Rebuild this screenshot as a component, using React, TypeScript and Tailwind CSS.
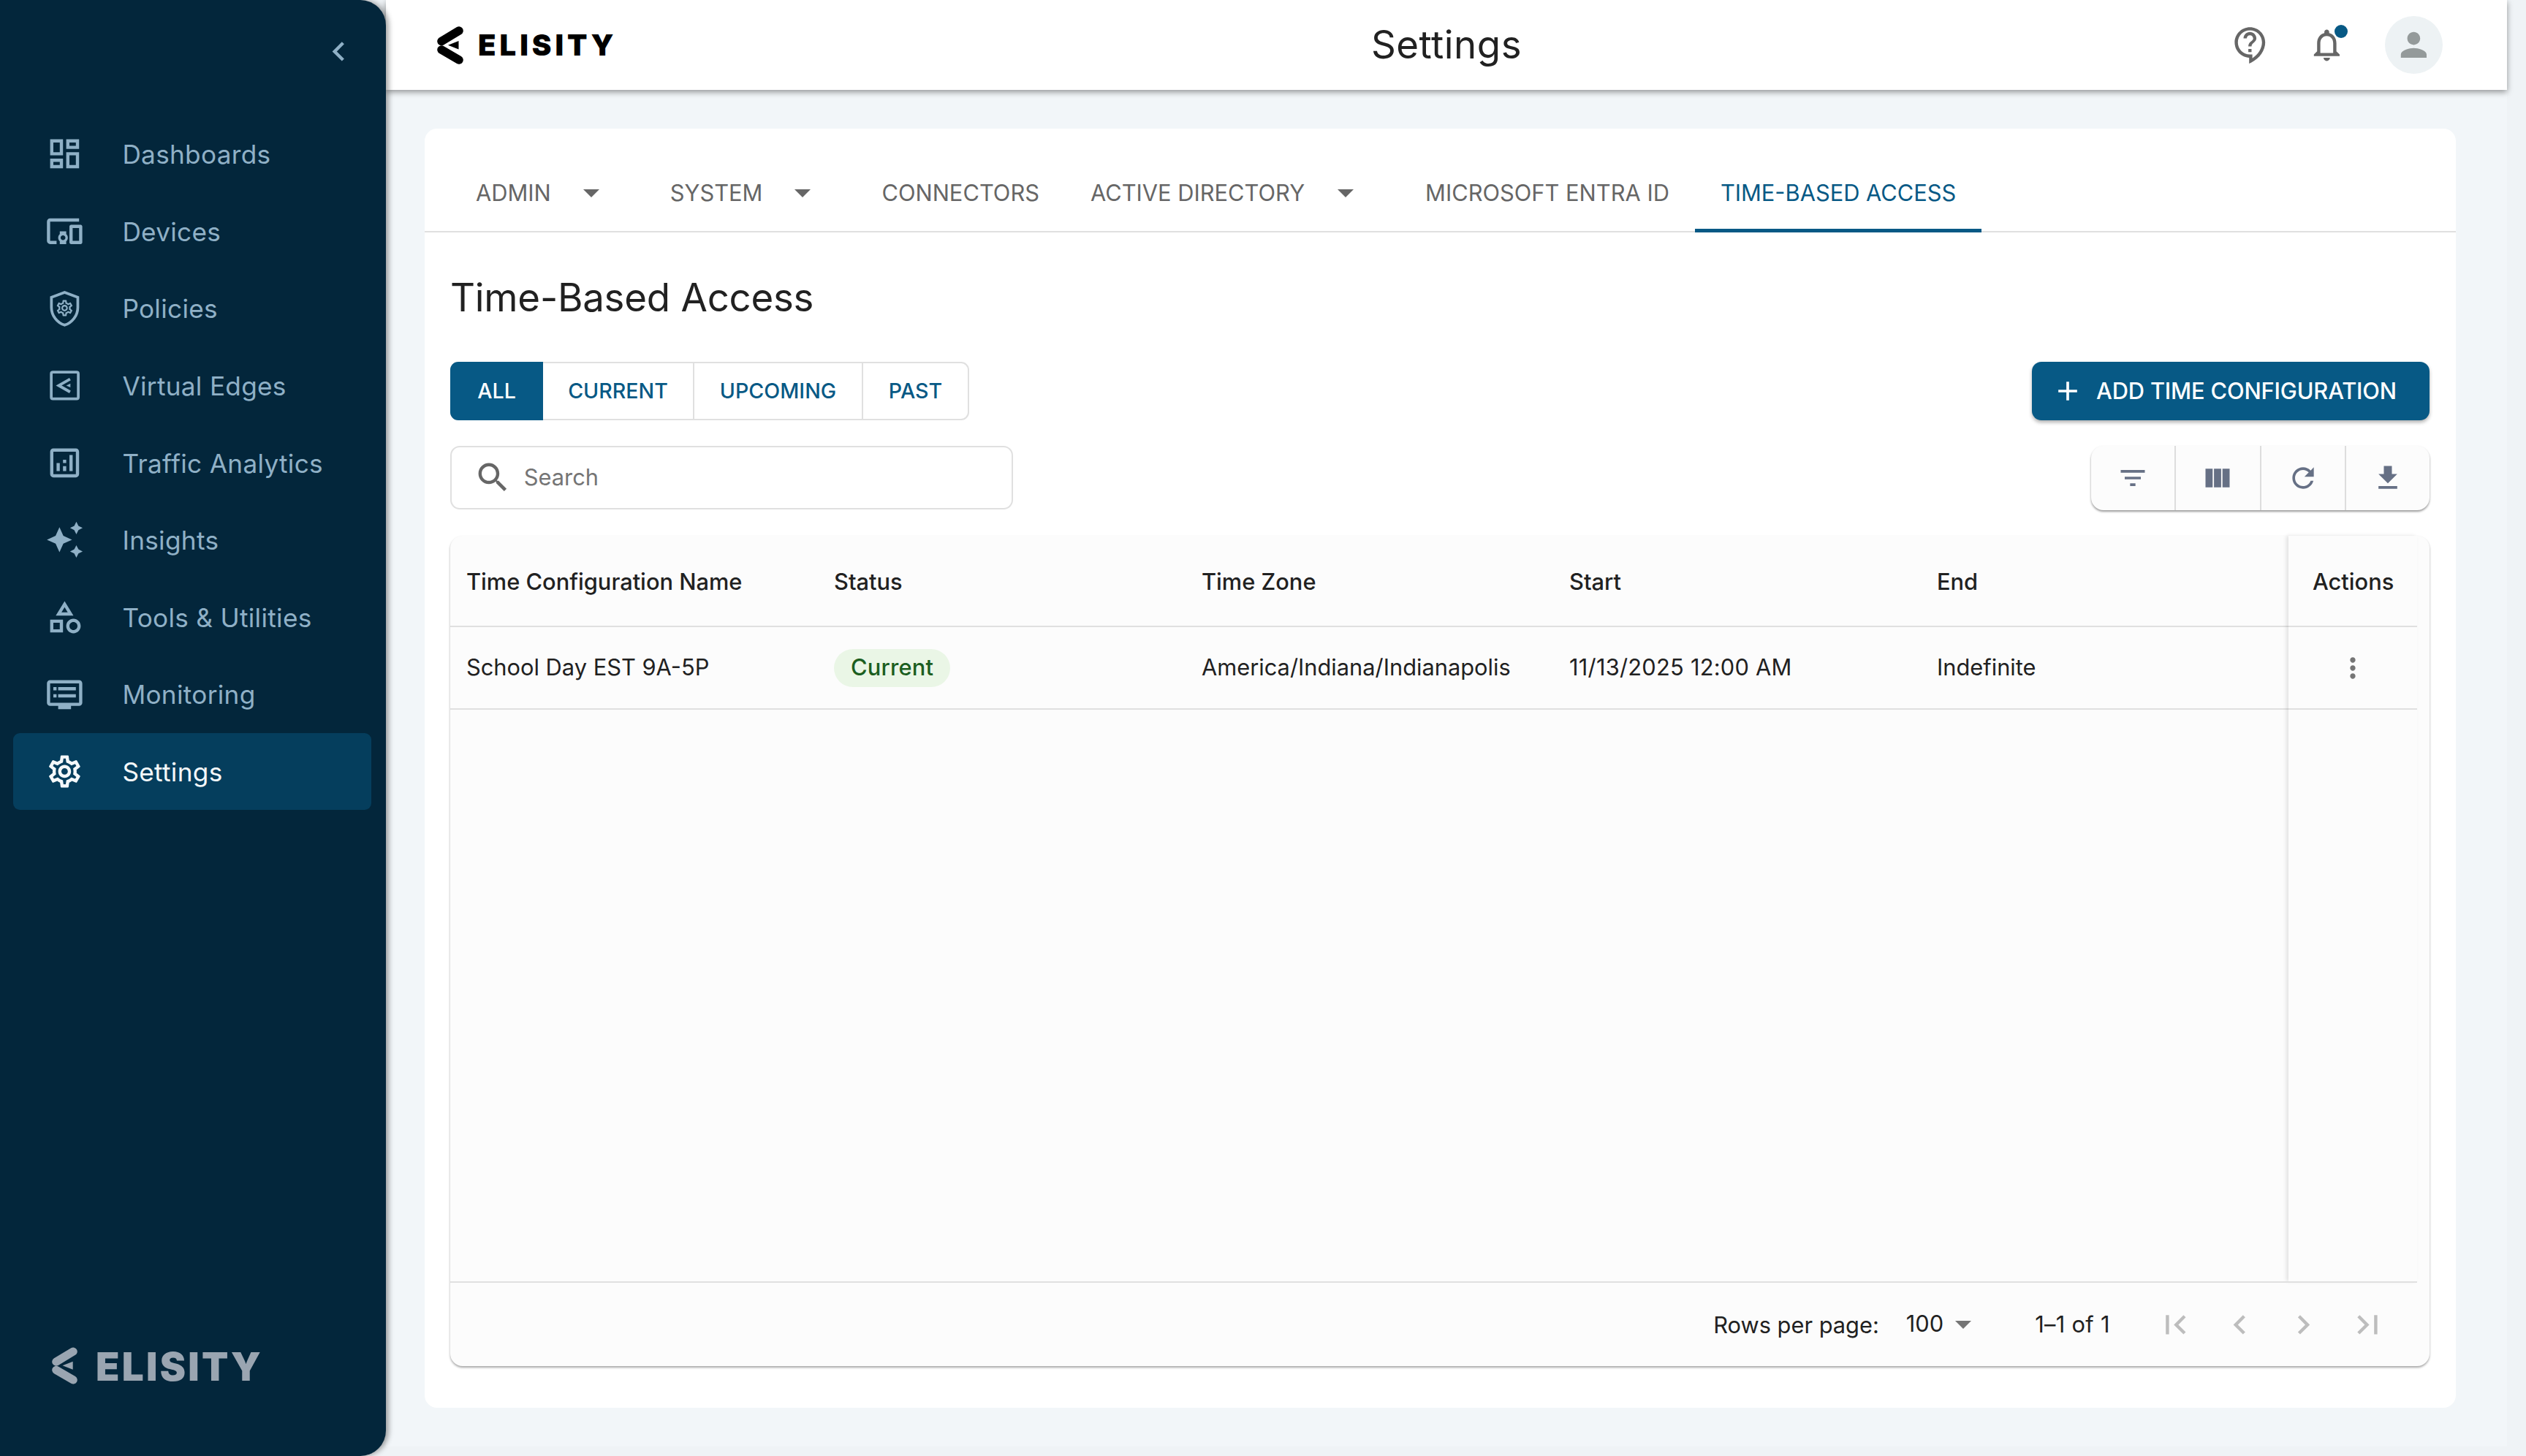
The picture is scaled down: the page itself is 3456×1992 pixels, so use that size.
import type { ReactNode } from "react";

const ICONS = {
  dashboard:
    "M19 5v2h-4V5h4M9 5v6H5V5h4m10 8v6h-4v-6h4M9 17v2H5v-2h4M21 3h-8v6h8V3zM11 3H3v10h8V3zm10 8h-8v10h8V11zm-10 4H3v6h8v-6z",
  devices:
    "M3 6h18V4H3c-1.1 0-2 .9-2 2v12c0 1.1.9 2 2 2h4v-2H3V6zm10 6H9v1.78c-.61.55-1 1.33-1 2.22s.39 1.67 1 2.22V20h4v-1.78c.61-.55 1-1.34 1-2.22s-.39-1.67-1-2.22V12zm-2 5.5c-.83 0-1.5-.68-1.5-1.5s.67-1.5 1.5-1.5 1.5.68 1.5 1.5-.67 1.5-1.5 1.5zM22 8h-6c-.5 0-1 .5-1 1v10c0 .5.5 1 1 1h6c.5 0 1-.5 1-1V9c0-.5-.5-1-1-1zm-1 10h-4v-8h4v8z",
  analytics:
    "M19 3H5c-1.1 0-2 .9-2 2v14c0 1.1.9 2 2 2h14c1.1 0 2-.9 2-2V5c0-1.1-.9-2-2-2zm0 16H5V5h14v14zM7 12h2v5H7zm8-5h2v10h-2zm-4 7h2v3h-2zm0-4h2v2h-2z",
  category:
    "M12 2l-5.5 9h11L12 2zm0 3.84L13.93 9h-3.87L12 5.84zM17.5 13c-2.49 0-4.5 2.01-4.5 4.5s2.01 4.5 4.5 4.5 4.5-2.01 4.5-4.5-2.01-4.5-4.5-4.5zm0 7c-1.38 0-2.5-1.12-2.5-2.5s1.12-2.5 2.5-2.5 2.5 1.12 2.5 2.5-1.12 2.5-2.5 2.5zM3 21.5h8v-8H3v8zm2-6h4v4H5v-4z",
  monitor:
    "M21 3H3c-1.1 0-2 .9-2 2v12c0 1.1.9 2 2 2h5v2h8v-2h5c1.1 0 2-.9 2-2V5c0-1.1-.9-2-2-2zm0 14H3V5h18v12zM5 7.3h2v2H5zM8 7.3h11v2H8zM5 11.7h2v2H5zM8 11.7h11v2H8z",
  settings:
    "M19.43 12.98c.04-.32.07-.64.07-.98 0-.34-.03-.66-.07-.98l2.11-1.65c.19-.15.24-.42.12-.64l-2-3.46c-.09-.16-.26-.25-.44-.25-.06 0-.12.01-.17.03l-2.49 1c-.52-.4-1.08-.73-1.69-.98l-.38-2.65C14.46 2.18 14.25 2 14 2h-4c-.25 0-.46.18-.49.42l-.38 2.65c-.61.25-1.17.59-1.69.98l-2.49-1c-.06-.02-.12-.03-.18-.03-.17 0-.34.09-.43.25l-2 3.46c-.13.22-.07.49.12.64l2.11 1.65c-.04.32-.07.65-.07.98 0 .33.03.66.07.98l-2.11 1.65c-.19.15-.24.42-.12.64l2 3.46c.09.16.26.25.44.25.06 0 .12-.01.17-.03l2.49-1c.52.4 1.08.73 1.69.98l.38 2.65c.03.24.24.42.49.42h4c.25 0 .46-.18.49-.42l.38-2.65c.61-.25 1.17-.59 1.69-.98l2.49 1c.06.02.12.03.18.03.17 0 .34-.09.43-.25l2-3.46c.12-.22.07-.49-.12-.64l-2.11-1.65zm-1.98-1.71c.04.31.05.52.05.73 0 .21-.02.43-.05.73l-.14 1.13.89.7 1.08.84-.7 1.21-1.27-.51-1.04-.42-.9.68c-.43.32-.84.56-1.25.73l-1.06.43-.16 1.13-.2 1.35h-1.4l-.19-1.35-.16-1.13-1.06-.43c-.43-.18-.83-.41-1.23-.71l-.91-.7-1.06.43-1.27.51-.7-1.21 1.08-.84.89-.7-.14-1.13c-.03-.31-.05-.54-.05-.74s.02-.43.05-.73l.14-1.13-.89-.7-1.08-.84.7-1.21 1.27.51 1.04.42.9-.68c.43-.32.84-.56 1.25-.73l1.06-.43.16-1.13.2-1.35h1.39l.19 1.35.16 1.13 1.06.43c.43.18.83.41 1.23.71l.91.7 1.06-.43 1.27-.51.7 1.21-1.07.85-.89.7.14 1.13zM12 8c-2.21 0-4 1.79-4 4s1.79 4 4 4 4-1.79 4-4-1.79-4-4-4zm0 6c-1.1 0-2-.9-2-2s.9-2 2-2 2 .9 2 2-.9 2-2 2z",
  sparkles:
    "M8.8 4.2 11.2 9.6 16.6 12 11.2 14.4 8.8 19.8 6.4 14.4 1 12 6.4 9.6zM19.3 .8 20.6 3.4 23.2 4.7 20.6 6 19.3 8.6 18 6 15.4 4.7 18 3.4zM19.3 15.4 20.6 18 23.2 19.3 20.6 20.6 19.3 23.2 18 20.6 15.4 19.3 18 18z",
  chevronLeft: "M15.41 7.41 14 6l-6 6 6 6 1.41-1.41L10.83 12z",
  chevronRight: "M10 6 8.59 7.41 13.17 12l-4.58 4.59L10 18l6-6z",
  firstPage: "M18.41 16.59 13.82 12l4.59-4.59L17 6l-6 6 6 6zM6 6h2v12H6z",
  lastPage: "M5.59 7.41 10.18 12l-4.59 4.59L7 18l6-6-6-6zM16 6h2v12h-2z",
  help: "M11 23.59v-3.6c-5.01-.26-9-4.42-9-9.49C2 5.26 6.26 1 11.5 1S21 5.26 21 10.5c0 4.95-3.44 9.93-8.57 12.4l-1.43.69zM11.5 3C7.36 3 4 6.36 4 10.5S7.36 18 11.5 18H13v2.3c3.64-2.3 6-6.08 6-9.8C19 6.36 15.64 3 11.5 3zm-1 11.5h2v2h-2zm2-1.5h-2c0-3.25 3-3 3-5 0-1.1-.9-2-2-2s-2 .9-2 2h-2c0-2.21 1.79-4 4-4s4 1.79 4 4c0 2.5-3 2.75-3 5z",
  bell: "M12 22c1.1 0 2-.9 2-2h-4c0 1.1.9 2 2 2zm6-6v-5c0-3.07-1.63-5.64-4.5-6.32V4c0-.83-.67-1.5-1.5-1.5s-1.5.67-1.5 1.5v.68C7.64 5.36 6 7.92 6 11v5l-2 2v1h16v-1l-2-2zm-2 1H8v-6c0-2.48 1.51-4.5 4-4.5s4 2.02 4 4.5v6z",
  person:
    "M12 12c2.21 0 4-1.79 4-4s-1.79-4-4-4-4 1.79-4 4 1.79 4 4 4zm0 2c-2.67 0-8 1.34-8 4v2h16v-2c0-2.66-5.33-4-8-4z",
  search:
    "M15.5 14h-.79l-.28-.27C15.41 12.59 16 11.11 16 9.5 16 5.91 13.09 3 9.5 3S3 5.91 3 9.5 5.91 16 9.5 16c1.61 0 3.09-.59 4.23-1.57l.27.28v.79l5 4.99L20.49 19l-4.99-5zm-6 0C7.01 14 5 11.99 5 9.5S7.01 5 9.5 5 14 7.01 14 9.5 11.99 14 9.5 14z",
  plus: "M19 13h-6v6h-2v-6H5v-2h6V5h2v6h6v2z",
  filter: "M10 18h4v-2h-4v2zM3 6v2h18V6H3zm3 7h12v-2H6v2z",
  columns: "M14.67 5v14H9.33V5h5.34zm1 14H21V5h-5.33v14zm-7.34 0V5H3v14h5.33z",
  refresh:
    "M17.65 6.35C16.2 4.9 14.21 4 12 4c-4.42 0-7.99 3.58-7.99 8s3.57 8 7.99 8c3.73 0 6.84-2.55 7.73-6h-2.08c-.82 2.33-3.04 4-5.65 4-3.31 0-6-2.69-6-6s2.69-6 6-6c1.66 0 3.14.69 4.22 1.78L13 11h7V4l-2.35 2.35z",
  download: "M19 9h-4V3H9v6H5l7 7 7-7zM5 18v2h14v-2H5z",
  dots: "M12 8c1.1 0 2-.9 2-2s-.9-2-2-2-2 .9-2 2 .9 2 2 2zm0 2c-1.1 0-2 .9-2 2s.9 2 2 2 2-.9 2-2-.9-2-2-2zm0 6c-1.1 0-2 .9-2 2s.9 2 2 2 2-.9 2-2-.9-2-2-2z",
};

function Icon({ d, className }: { d: string; className: string }) {
  return (
    <svg viewBox="0 0 24 24" fill="currentColor" className={className}>
      <path d={d} />
    </svg>
  );
}

function ShieldIcon({ className }: { className: string }) {
  return (
    <svg viewBox="0 0 24 24" fill="none" className={className}>
      <path
        d="M12 1.8 3.8 4.9v6.3c0 5 3.5 9.5 8.2 11 4.7-1.5 8.2-6 8.2-11V4.9z"
        stroke="currentColor"
        strokeWidth="1.7"
      />
      <g transform="translate(6 5.6) scale(.5)">
        <path d={ICONS.settings} fill="currentColor" />
      </g>
    </svg>
  );
}

function EdgeIcon({ className }: { className: string }) {
  return (
    <svg viewBox="0 0 24 24" fill="none" className={className}>
      <rect x="3.7" y="3.7" width="16.8" height="16.6" rx="1" stroke="currentColor" strokeWidth="1.7" />
      <path d="M15.4 8 8.4 12l7 4" stroke="currentColor" strokeWidth="1.8" />
      <path d="M15.6 10.8v2.4L13 12z" fill="currentColor" />
    </svg>
  );
}

function LogoMark({ className }: { className: string }) {
  return (
    <svg viewBox="0 0 36 52" fill="none" className={className}>
      <path d="M30 6 6 20.5" stroke="currentColor" strokeWidth="11.5" strokeLinecap="round" />
      <path d="M30 46 6 32" stroke="currentColor" strokeWidth="11.5" strokeLinecap="round" />
      <path d="M15 25.7 29.5 20v11.5z" fill="currentColor" />
    </svg>
  );
}

const NAV: { label: string; icon: ReactNode; active?: boolean }[] = [
  { label: "Dashboards", icon: <Icon d={ICONS.dashboard} className="w-[52.8px] h-[52.8px]" /> },
  { label: "Devices", icon: <Icon d={ICONS.devices} className="w-[52.8px] h-[52.8px]" /> },
  { label: "Policies", icon: <ShieldIcon className="w-[52.8px] h-[52.8px]" /> },
  { label: "Virtual Edges", icon: <EdgeIcon className="w-[52.8px] h-[52.8px]" /> },
  { label: "Traffic Analytics", icon: <Icon d={ICONS.analytics} className="w-[52.8px] h-[52.8px]" /> },
  { label: "Insights", icon: <Icon d={ICONS.sparkles} className="w-[52.8px] h-[52.8px]" /> },
  { label: "Tools & Utilities", icon: <Icon d={ICONS.category} className="w-[52.8px] h-[52.8px]" /> },
  { label: "Monitoring", icon: <Icon d={ICONS.monitor} className="w-[52.8px] h-[52.8px]" /> },
  { label: "Settings", icon: <Icon d={ICONS.settings} className="w-[52.8px] h-[52.8px]" />, active: true },
];

function Sidebar() {
  return (
    <aside className="relative z-20 flex h-[1992px] w-[528px] shrink-0 flex-col rounded-r-[35px] bg-[#03263b] shadow-[4px_0_7px_rgba(0,0,0,0.35)]">
      <div className="flex h-[158px] shrink-0 justify-end pr-[38px] pt-[44px] text-[#8fb0c6]">
        <Icon d={ICONS.chevronLeft} className="w-[52.8px] h-[52.8px]" />
      </div>
      <nav className="flex flex-col">
        {NAV.map((item) => (
          <div
            key={item.label}
            className={
              item.active
                ? "ml-[18px] flex h-[105.6px] w-[490px] items-center gap-[53px] rounded-[9px] bg-[#053e5d] pl-[43.6px] text-[#f4f8fa]"
                : "ml-[18px] flex h-[105.6px] w-[490px] items-center gap-[53px] rounded-[9px] pl-[43.6px] text-[#8fb0c6]"
            }
          >
            {item.icon}
            <span className="pt-[2px] text-[35.2px] leading-none tracking-[0.3px]">{item.label}</span>
          </div>
        ))}
      </nav>
      <div className="mt-auto flex items-center gap-[25px] pb-[97px] pl-[71px] text-[#9aa5b1]">
        <LogoMark className="h-[53px] w-[35px]" />
        <span className="translate-y-[2px] text-[53px] font-black leading-none tracking-[3.3px]">ELISITY</span>
      </div>
    </aside>
  );
}

function Header() {
  return (
    <header className="relative z-10 grid h-[123px] shrink-0 grid-cols-[1fr_auto_1fr] items-center bg-white shadow-[0_3px_8px_rgba(0,0,0,0.4)]">
      <div className="flex items-center gap-[20px] pl-[70px] text-black">
        <LogoMark className="h-[52px] w-[36px]" />
        <span className="text-[40px] font-black leading-none tracking-[5px]">ELISITY</span>
      </div>
      <h1 className="text-[52.8px] font-normal leading-none tracking-[0.5px] text-[#212121]">Settings</h1>
      <div className="flex items-center justify-end pr-[88px]">
        <Icon d={ICONS.help} className="h-[52.8px] w-[52.8px] text-[#666666]" />
        <div className="relative ml-[51px] h-[52.8px] w-[52.8px] text-[#666666]">
          <Icon d={ICONS.bell} className="h-[52.8px] w-[52.8px]" />
          <span className="absolute left-[37px] top-[-1px] h-[18px] w-[18px] rounded-full bg-[#075985]" />
        </div>
        <div className="ml-[53px] flex h-[79px] w-[79px] items-center justify-center rounded-full bg-[#edf2f4] text-[#949a9a]">
          <Icon d={ICONS.person} className="h-[52.8px] w-[52.8px]" />
        </div>
      </div>
    </header>
  );
}

function Caret({ className }: { className: string }) {
  return (
    <svg viewBox="0 0 22 11" fill="currentColor" className={className}>
      <path d="M0 0h22L11 11z" />
    </svg>
  );
}

const TABS: { label: string; caretBox?: string; active?: boolean }[] = [
  { label: "ADMIN", caretBox: "flex w-[93px] shrink-0 items-center" },
  { label: "SYSTEM", caretBox: "flex w-[93px] shrink-0 items-center" },
  { label: "CONNECTORS" },
  { label: "ACTIVE DIRECTORY", caretBox: "ml-[1px] flex w-[94px] shrink-0 items-center" },
  { label: "MICROSOFT ENTRA ID" },
  { label: "TIME-BASED ACCESS", active: true },
];

function Tabs() {
  return (
    <div className="flex h-[142px] shrink-0 items-end border-b-2 border-[#e0e0e0] pl-[35px]">
      {TABS.map((tab) => (
        <div
          key={tab.label}
          className={
            tab.active
              ? "-mb-[2px] flex h-[106px] items-center border-b-[5px] border-[#075985] px-[35px] pt-[3px] text-[30.8px] leading-none text-[#075985]"
              : "flex h-[104px] items-center px-[35px] text-[30.8px] leading-none text-[#666666]"
          }
        >
          {tab.label}
          {tab.caretBox && (
            <span className={tab.caretBox}>
              <Caret className="ml-[44px] h-[11px] w-[22px] text-[#666666]" />
            </span>
          )}
        </div>
      ))}
    </div>
  );
}

function Filters() {
  return (
    <div className="flex h-[80px] items-stretch rounded-[11px] border-2 border-[#e0e0e0] text-[28.6px] font-medium text-[#075985]">
      <div className="-my-[2px] -ml-[2px] flex w-[127px] items-center justify-center rounded-l-[11px] bg-[#075985] text-white">
        ALL
      </div>
      <div className="flex w-[207px] items-center justify-center border-r-2 border-[#e0e0e0]">CURRENT</div>
      <div className="flex w-[231px] items-center justify-center border-r-2 border-[#e0e0e0]">UPCOMING</div>
      <div className="flex w-[143px] items-center justify-center">PAST</div>
    </div>
  );
}

function Toolbar() {
  const icons = [ICONS.filter, ICONS.columns, ICONS.refresh, ICONS.download];
  return (
    <div className="flex h-[88px] w-[463px] rounded-[17px] bg-[#fcfcfc] text-[#667085] shadow-[0_2px_3px_rgba(0,0,0,0.4)]">
      {icons.map((d, i) => (
        <div
          key={d}
          className={
            i < 3
              ? "flex flex-1 items-center justify-center border-r-2 border-[#dddddd]"
              : "flex flex-1 items-center justify-center"
          }
        >
          <Icon d={d} className="h-[44px] w-[44px]" />
        </div>
      ))}
    </div>
  );
}

const COLUMNS = ["Time Configuration Name", "Status", "Time Zone", "Start", "End"];

function DataTable() {
  return (
    <div className="mt-[35px] flex h-[1136px] w-[2708px] flex-col rounded-[17px] bg-[#fcfcfc] text-[30.8px] leading-none text-[#212121] shadow-[0_2px_3px_rgba(0,0,0,0.35)]">
      <div className="mr-[17px] flex h-[1020px] shrink-0">
        <div className="min-w-0 flex-1">
          <div className="grid h-[125px] grid-cols-[repeat(5,503px)] items-center border-b-2 border-[#e0e0e0] pl-[22px] pt-[3px] font-medium">
            {COLUMNS.map((c) => (
              <div key={c}>{c}</div>
            ))}
          </div>
          <div className="grid h-[113px] grid-cols-[repeat(5,503px)] items-center border-b-2 border-[#e0e0e0] pl-[22px]">
            <div>School Day EST 9A-5P</div>
            <div>
              <span className="inline-flex h-[52px] items-center rounded-full bg-[#eaf6e6] px-[23px] font-medium tracking-[0.2px] text-[#1b5e20]">
                Current
              </span>
            </div>
            <div>America/Indiana/Indianapolis</div>
            <div className="tracking-[0.25px]">11/13/2025 12:00 AM</div>
            <div>Indefinite</div>
          </div>
        </div>
        <div className="w-[176px] shrink-0 shadow-[-3px_0_5px_rgba(0,0,0,0.1)]">
          <div className="flex h-[125px] items-center border-b-2 border-[#e0e0e0] pl-[33px] pt-[3px] font-medium">
            Actions
          </div>
          <div className="flex h-[113px] items-center justify-center border-b-2 border-[#e0e0e0] text-[#757575]">
            <Icon d={ICONS.dots} className="h-[44px] w-[44px]" />
          </div>
        </div>
      </div>
      <div className="mr-[17px] flex h-[116px] shrink-0 items-center justify-end border-t-2 border-[#e0e0e0] pr-[41px]">
        <span className="translate-y-[1px]">Rows per page:</span>
        <span className="ml-[37px] -translate-y-[1px]">100</span>
        <Caret className="ml-[16px] h-[11px] w-[22px] text-[#757575]" />
        <span className="ml-[87px] tracking-[0.3px]">1–1 of 1</span>
        <div className="ml-[63px] flex gap-[35px] text-[#bdbdbd]">
          <Icon d={ICONS.firstPage} className="h-[52.8px] w-[52.8px]" />
          <Icon d={ICONS.chevronLeft} className="h-[52.8px] w-[52.8px]" />
          <Icon d={ICONS.chevronRight} className="h-[52.8px] w-[52.8px]" />
          <Icon d={ICONS.lastPage} className="h-[52.8px] w-[52.8px]" />
        </div>
      </div>
    </div>
  );
}

export default function App() {
  return (
    <div className="flex h-[1992px] w-[3456px] overflow-hidden bg-[#eff3f6] font-['Inter',sans-serif]">
      <Sidebar />
      <main className="flex h-[1979px] w-[2902px] flex-col bg-[#f2f6f9]">
        <Header />
        <section className="ml-[53px] mt-[53px] flex h-[1750px] w-[2779px] flex-col rounded-[17px] bg-white">
          <Tabs />
          <div className="flex flex-col pl-[35px] pr-[36px]">
            <h2 className="mt-[57px] h-[64px] text-[52.8px] font-normal leading-[64px] tracking-[-0.25px] text-[#212121]">
              Time-Based Access
            </h2>
            <div className="mt-[56px] flex items-center justify-between">
              <Filters />
              <div className="flex h-[80px] w-[544px] items-center gap-[17px] rounded-[13px] bg-[#075985] pl-[27px] text-[30.8px] font-medium tracking-[-0.15px] text-white shadow-[0_3px_5px_rgba(0,0,0,0.3)]">
                <Icon d={ICONS.plus} className="h-[44px] w-[44px]" />
                ADD TIME CONFIGURATION
              </div>
            </div>
            <div className="mt-[35px] flex items-start justify-between">
              <div className="flex h-[87px] w-[770px] items-center gap-[16px] rounded-[13px] border-2 border-[#e0e0e0] pl-[30px] text-[30.8px] text-[#757575]">
                <Icon d={ICONS.search} className="h-[52.8px] w-[52.8px] text-[#666666]" />
                Search
              </div>
              <Toolbar />
            </div>
            <DataTable />
          </div>
        </section>
      </main>
    </div>
  );
}
